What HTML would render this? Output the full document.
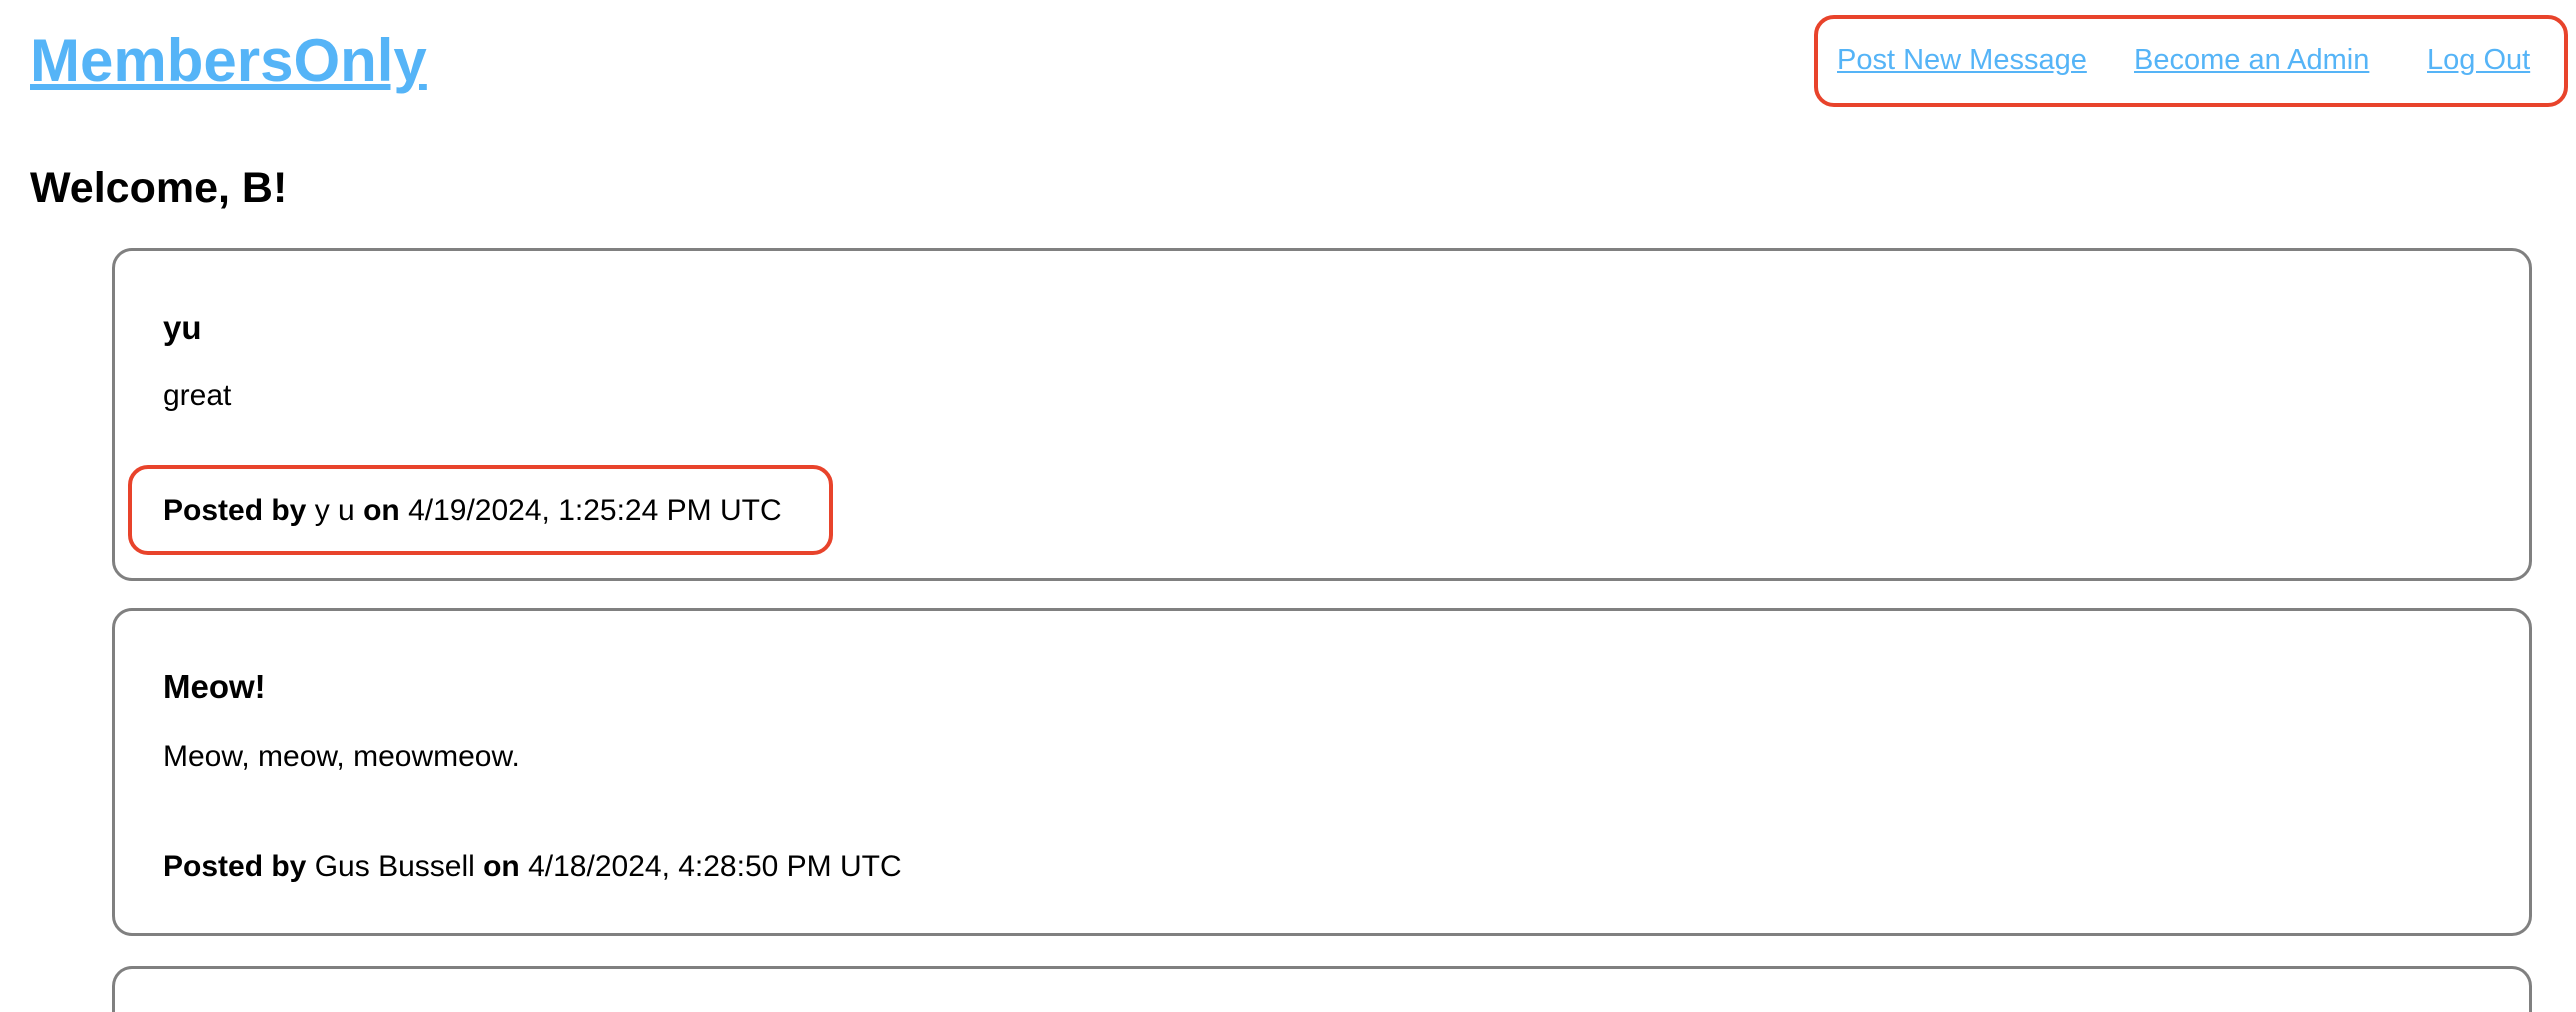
<!DOCTYPE html>
<html><head><meta charset="utf-8"><style>
*{margin:0;padding:0;box-sizing:border-box}
html,body{width:2576px;height:1012px;overflow:hidden;background:#fff}
body{font-family:"Liberation Sans",sans-serif;color:#000}
#wrap{position:relative;width:2576px;height:1012px;overflow:hidden}
a{color:#55b4f7;text-decoration:underline}
.abs{position:absolute;white-space:nowrap}
.title{left:30px;top:26px;font-size:60px;font-weight:bold;line-height:70px}
.navbox{left:1814px;top:15px;width:754px;height:92px;border:4px solid #e8432b;border-radius:20px}
.nav{top:43px;font-size:29px;line-height:34px}
.welcome{left:30px;top:163px;font-size:43px;font-weight:bold;line-height:50px}
.card{left:112px;width:2420px;border:3px solid #808080;border-radius:20px}
.h{font-size:33px;font-weight:bold;line-height:38px}
.t{font-size:30px;line-height:34px}
.redbox{left:128px;top:465px;width:705px;height:90px;border:4px solid #e8432b;border-radius:20px}
</style></head><body><div id="wrap">
<a class="abs title" href="#">MembersOnly</a>
<div class="abs navbox"></div>
<a class="abs nav" style="left:1837px" href="#">Post New Message</a>
<a class="abs nav" style="left:2134px" href="#">Become an Admin</a>
<a class="abs nav" style="left:2427px" href="#">Log Out</a>
<div class="abs welcome">Welcome, B!</div>

<div class="abs card" style="top:248px;height:333px"></div>
<div class="abs h" style="left:163px;top:309px">yu</div>
<div class="abs t" style="left:163px;top:379px">great</div>
<div class="abs redbox"></div>
<div class="abs t" style="left:163px;top:494px"><b>Posted by</b> y u <b>on</b> 4/19/2024, 1:25:24 PM UTC</div>

<div class="abs card" style="top:608px;height:328px"></div>
<div class="abs h" style="left:163px;top:668px">Meow!</div>
<div class="abs t" style="left:163px;top:740px">Meow, meow, meowmeow.</div>
<div class="abs t" style="left:163px;top:850px"><b>Posted by</b> Gus Bussell <b>on</b> 4/18/2024, 4:28:50 PM UTC</div>

<div class="abs card" style="top:966px;height:46px;border-bottom:none;border-radius:20px 20px 0 0"></div>
</div></body></html>
